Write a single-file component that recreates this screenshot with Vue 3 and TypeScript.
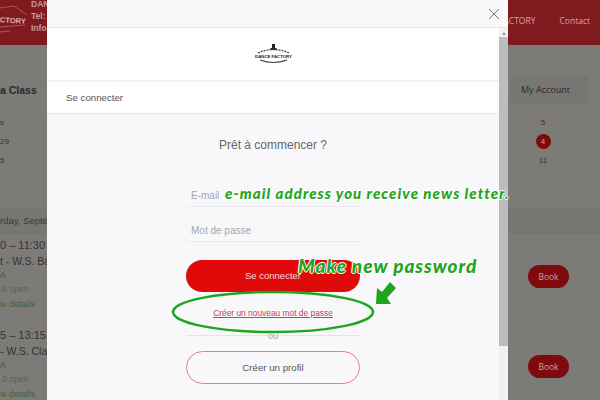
<script setup lang="ts">
interface Session { time: string; title: string; place: string; open: string; key: string }
const sessions: Session[] = [
  { time: '0 – 11:30', title: 't - W.S. Ba', place: 'A', open: '.0 open', key: 'first' },
  { time: '5 – 13:15', title: '- W.S. Clas', place: 'A', open: '.0 open', key: 'second' },
]
</script>

<template>
  <div class="page">
    <header class="site-header">
      <div class="brand">
        <svg class="brand-mark" width="31" height="45" viewBox="0 0 31 45">
          <g fill="none" stroke="#b9686c" stroke-width="0.8">
            <path d="M0 8 L14 6 L27 15" />
            <path d="M0 27 L25 25" />
            <path d="M0 32 L10 31" />
          </g>
          <text x="0" y="23" class="brand-word" transform="rotate(3 12 20)">CTORY</text>
        </svg>
        <div class="brand-lines">
          <span>DANCE</span>
          <span>Tel:</span>
          <span>Info</span>
        </div>
      </div>
      <nav class="site-nav">
        <span>FACTORY</span>
        <span>Contact</span>
      </nav>
    </header>

    <div class="tabs">
      <span class="tab-left">a Class</span>
      <span class="tab-right">My Account</span>
    </div>

    <div class="cal">
      <div class="cal-row"><span>s</span><span class="cal-day muted-red">5</span></div>
      <div class="cal-row"><span>29</span><span class="cal-day"><b class="today">4</b></span></div>
      <div class="cal-row"><span>5</span><span class="cal-day">11</span></div>
    </div>

    <div class="date-bar">rday, September</div>

    <div v-for="s in sessions" :key="s.key" class="session">
      <div class="session-text">
        <div class="s-time">{{ s.time }}</div>
        <div class="s-title">{{ s.title }}</div>
        <div class="s-place">{{ s.place }}</div>
        <div class="s-open">{{ s.open }}</div>
        <div class="s-link">w details</div>
      </div>
      <button class="book">Book</button>
    </div>

    <section class="modal">
      <div class="modal-top">
        <svg class="close" width="12" height="12" viewBox="0 0 12 12">
          <path d="M1 1 L11 11 M11 1 L1 11" stroke="#777" stroke-width="1" fill="none" />
        </svg>
      </div>
      <div class="modal-main">
        <div class="modal-scroll">
          <div class="logo-band">
            <svg width="37" height="21" viewBox="0 0 37 21">
              <path d="M17 0 h3 v4 h1.500 v2 h-6 v-2 h1.500 z" fill="#222" />
              <path d="M3 9 Q18 2 34 9" stroke="#444" stroke-width="1.300" fill="none" stroke-dasharray="2 1" />
              <text x="18.500" y="13.500" text-anchor="middle" class="logo-word">DANCE FACTORY</text>
              <path d="M5 16 Q18.500 21 32 16" stroke="#444" stroke-width="1.200" fill="none" />
            </svg>
          </div>
          <div class="tab-band">Se connecter</div>
          <div class="form">
            <h2 class="heading">Prêt à commencer ?</h2>
            <div class="field">E-mail</div>
            <div class="field second">Mot de passe</div>
            <button class="primary">Se connecter</button>
            <a class="reset">Créer un nouveau mot de passe</a>
            <div class="or"><span>ou</span></div>
            <button class="outline">Créer un profil</button>
          </div>
        </div>
        <div class="scrollbar">
          <span class="sb-arrow"></span>
          <span class="sb-thumb"></span>
        </div>
      </div>
    </section>

    <span class="note note-mail">e-mail address you receive news letter.</span>
    <span class="note note-pass">Make new password</span>
    <svg class="marks" width="600" height="400" viewBox="0 0 600 400">
      <ellipse cx="273" cy="312" rx="100" ry="20" fill="none" stroke="#1ea51e" stroke-width="2.500" />
      <path d="M376 304 L377 288 L382 292 L390 282 L396 288 L387 298 L391 304 Z" fill="#1ea51e" />
    </svg>
  </div>
</template>

<style>
html, body { margin: 0; }
</style>

<style scoped>
.page {
  position: relative;
  width: 600px;
  height: 400px;
  overflow: hidden;
  background: #7c7b78;
  font-family: "Liberation Sans", Arial, sans-serif;
  color: #2a2a2a;
}
.site-header {
  height: 45px;
  background: #7f1a1e;
  display: flex;
  justify-content: space-between;
  align-items: center;
}
.brand { display: flex; }
.brand-mark { display: block; }
.brand-word { font: 700 7.500px "Liberation Sans", sans-serif; fill: #d8b4b6; }
.brand-lines {
  display: flex;
  flex-direction: column;
  gap: 3px;
  font-size: 8.500px;
  line-height: 9px;
  font-weight: 700;
  color: #c99a9c;
  white-space: nowrap;
  width: 16px;
}
.site-nav {
  display: flex;
  gap: 24px;
  padding-right: 10px;
  font-family: "Open Sans", sans-serif;
  font-size: 8.500px;
  color: #cfa7a9;
  margin-top: -4px;
}
.tabs {
  margin-top: 30px;
  height: 28px;
  display: flex;
  justify-content: space-between;
  align-items: center;
  font-size: 10px;
}
.tab-left { font-weight: 700; color: #2a2a2a; font-size: 10.500px; padding-top: 2px; }
.tab-right {
  width: 67px;
  height: 28px;
  margin-right: 12px;
  padding-left: 10px;
  background: #777673;
  line-height: 30px;
  font-family: "Open Sans", sans-serif;
  font-size: 9px;
}
.cal { margin-top: 10px; height: 76px; font-size: 8px; color: #333; }
.cal-row {
  height: 19px;
  display: flex;
  justify-content: space-between;
  align-items: center;
}
.cal-day { width: 20px; margin-right: 47px; text-align: center; }
.muted-red { color: #5c2a2a; }
.today {
  display: block;
  width: 15px;
  height: 15px;
  margin: 0 auto;
  border-radius: 50%;
  background: #7e0a0a;
  color: #c9a0a0;
  line-height: 15px;
  font-weight: 400;
}
.date-bar {
  height: 26px;
  line-height: 26px;
  margin-top: 19px;
  background: #777673;
  font-size: 9.500px;
  color: #3a3a3a;
  white-space: nowrap;
}
.session {
  height: 90px;
  box-sizing: border-box;
  padding-bottom: 5px;
  display: flex;
  justify-content: space-between;
  align-items: center;
  border-bottom: 1px solid #767572;
}
.session-text { white-space: nowrap; align-self: flex-start; }
.s-time { font-size: 11px; height: 17px; line-height: 17px; color: #333; margin-top: 3px; }
.s-title { font-size: 10.500px; height: 15px; line-height: 15px; color: #333; }
.s-place { font-size: 8.500px; height: 13px; line-height: 13px; color: #4f4f4d; }
.s-open { font-size: 8.500px; height: 14px; line-height: 14px; color: #5c5c5a; }
.s-link { font-size: 9px; height: 17px; line-height: 17px; color: #3f633a; }
.book {
  width: 41px;
  height: 23px;
  margin-right: 31px;
  padding: 0;
  border: 0;
  border-radius: 12px;
  background: #7e0a0e;
  color: #c9a0a0;
  font-family: "Open Sans", sans-serif;
  font-size: 8.500px;
}

.modal {
  position: absolute;
  left: 47px;
  top: 0;
  width: 461px;
  height: 400px;
  background: #f8f8fb;
  display: flex;
  flex-direction: column;
}
.modal-top {
  height: 28px;
  flex: none;
  border-bottom: 1px solid #e4e4e8;
  display: flex;
  justify-content: flex-end;
  align-items: flex-start;
  padding: 8px 8px 0 0;
  box-sizing: border-box;
}
.modal-main { flex: 1; display: flex; min-height: 0; }
.modal-scroll { flex: 1; }
.logo-band {
  height: 52px;
  background: #fff;
  display: flex;
  justify-content: center;
  align-items: center;
  border-bottom: 2px solid #f1f1f4;
}
.logo-word { font: 700 4.300px "Liberation Sans", sans-serif; fill: #222; }
.tab-band {
  height: 31px;
  line-height: 31px;
  padding-left: 19px;
  background: #fff;
  border-bottom: 1px solid #e4e4e8;
  font-size: 9.700px;
  color: #555;
}
.form {
  width: 174px;
  margin-left: 139px;
  display: flex;
  flex-direction: column;
}
.heading {
  margin: 23px 0 0;
  height: 16px;
  font-weight: 400;
  font-size: 12px;
  line-height: 16px;
  text-align: center;
  color: #666;
}
.field {
  margin-top: 27px;
  height: 26px;
  line-height: 32px;
  padding-left: 5px;
  border-bottom: 1px solid #ececf0;
  font-size: 10px;
  color: #a6a6aa;
}
.field.second { margin-top: 8px; }
.primary {
  margin-top: 18px;
  height: 32px;
  padding: 0 0 2px;
  border: 0;
  border-radius: 16px;
  background: #e00a0a;
  color: #f6dede;
  font-family: inherit;
  font-size: 9.500px;
}
.reset {
  margin-top: 15px;
  height: 12px;
  line-height: 12px;
  text-align: center;
  font-size: 8.400px;
  color: #c8404f;
  text-decoration: underline;
}
.or {
  margin-top: 16px;
  height: 1px;
  background: #e2e4ea;
  display: flex;
  justify-content: center;
  align-items: center;
}
.or span { padding: 0 2px; font-size: 9.500px; color: #aaa; }
.outline {
  margin-top: 15px;
  height: 33px;
  padding: 0;
  border: 1px solid #e0808a;
  border-radius: 17px;
  background: transparent;
  color: #555;
  font-family: inherit;
  font-size: 9.700px;
}
.scrollbar {
  width: 9px;
  flex: none;
  background: #f1f1f1;
  display: flex;
  flex-direction: column;
  align-items: center;
}
.sb-arrow {
  margin-top: 4px;
  width: 0;
  height: 0;
  border-left: 2.500px solid transparent;
  border-right: 2.500px solid transparent;
  border-bottom: 3px solid #999;
}
.sb-thumb { margin-top: 2px; width: 9px; height: 309px; background: #bdbdbd; }

.note {
  position: absolute;
  font-family: Lato, sans-serif;
  font-style: italic;
  font-weight: 900;
  color: #1ea51e;
  white-space: nowrap;
  text-shadow: 1px 0 0 #fff, -1px 0 0 #fff, 0 1px 0 #fff, 0 -1px 0 #fff;
}
.note-mail { left: 225px; top: 184px; font-size: 15px; letter-spacing: 1.070px; }
.note-pass { left: 298px; top: 254px; font-size: 19px; letter-spacing: 0.940px; }
.marks { position: absolute; left: 0; top: 0; pointer-events: none; }
</style>
